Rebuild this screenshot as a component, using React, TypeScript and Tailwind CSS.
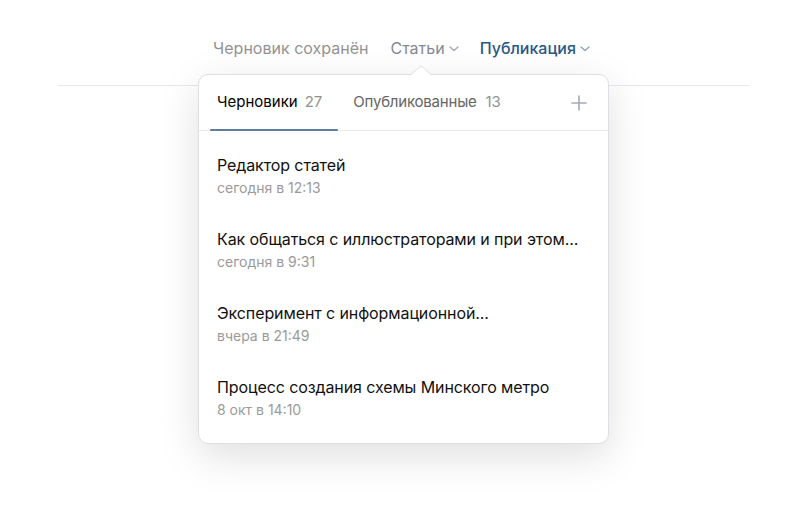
import React from "react";

const Chevron = ({ color }: { color: string }) => (
  <svg width="10" height="6" viewBox="0 0 10 6" className="ml-[4px] mt-[2px]">
    <path d="M1 1l4 3.6L9 1" fill="none" stroke={color} strokeWidth="1.3" strokeLinecap="round" strokeLinejoin="round" />
  </svg>
);

const items = [
  { t: "Редактор статей", d: "сегодня в 12:13" },
  { t: "Как общаться с иллюстраторами и при этом...", d: "сегодня в 9:31" },
  { t: "Эксперимент с информационной...", d: "вчера в 21:49" },
  { t: "Процесс создания схемы Минского метро", d: "8 окт в 14:10" },
];

export default function App() {
  return (
    <div className="relative w-[807px] h-[519px] bg-white overflow-hidden" style={{ fontFamily: "Inter, 'Noto Sans', sans-serif" }}>
      <div className="mx-[58px] h-[86px] border-b border-[#e7e8ec] flex items-start justify-center pt-[38px] pr-[4px]">
        <div className="flex items-center text-[16px] leading-[20px]">
          <span className="text-[#939393]">Черновик сохранён</span>
          <span className="ml-[22px] text-[#828a94] flex items-center">Статьи<Chevron color="#a0a8b1" /></span>
          <span className="ml-[21px] text-[#2a5885] font-medium flex items-center">Публикация<Chevron color="#8ea3bd" /></span>
        </div>
      </div>

      <div className="absolute left-[198px] top-[74px] w-[411px] h-[370px] bg-white rounded-[10px] border border-[#dcdfe4] shadow-[0_12px_40px_rgba(0,0,0,0.13)]">
        <svg className="absolute left-[211px] top-[-9px]" width="22" height="10" viewBox="0 0 22 10">
          <path d="M0 9.5 L9.5 1 Q11 0 12.5 1 L22 9.5" fill="white" stroke="#dcdfe4" strokeWidth="1" />
          <rect x="0" y="9.5" width="22" height="2" fill="white" />
        </svg>
        <div className="relative h-[56px] border-b border-[#e7e8ec] flex items-center pl-[11px]">
          <div className="relative h-full flex items-center pl-[7px] pr-[16px] text-[15px]">
            <span className="text-[#000]">Черновики</span>
            <span className="ml-[7px] text-[#939393]">27</span>
            <div className="absolute left-0 right-0 bottom-[-1px] h-[2px] bg-[#5f7d9f] rounded" />
          </div>
          <div className="ml-[15px] flex items-center text-[15px] tracking-[-0.2px]">
            <span className="text-[#656565]">Опубликованные</span>
            <span className="ml-[9px] text-[#939393]">13</span>
          </div>
          <div className="ml-auto mr-[20px] flex items-center">
            <svg width="18" height="18" viewBox="0 0 18 18">
              <path d="M9 2v14M2 9h14" stroke="#a3abb5" strokeWidth="1.6" strokeLinecap="round" />
            </svg>
          </div>
        </div>
        <div className="pt-[8px] px-[18px]">
          {items.map((it) => (
            <div key={it.t} className="h-[74px] flex flex-col justify-center">
              <div className="text-[16px] leading-[20px] text-[#111] tracking-[-0.1px]">{it.t}</div>
              <div className="mt-[4px] text-[14px] leading-[18px] text-[#9a9a9a]">{it.d}</div>
            </div>
          ))}
        </div>
      </div>
    </div>
  );
}
